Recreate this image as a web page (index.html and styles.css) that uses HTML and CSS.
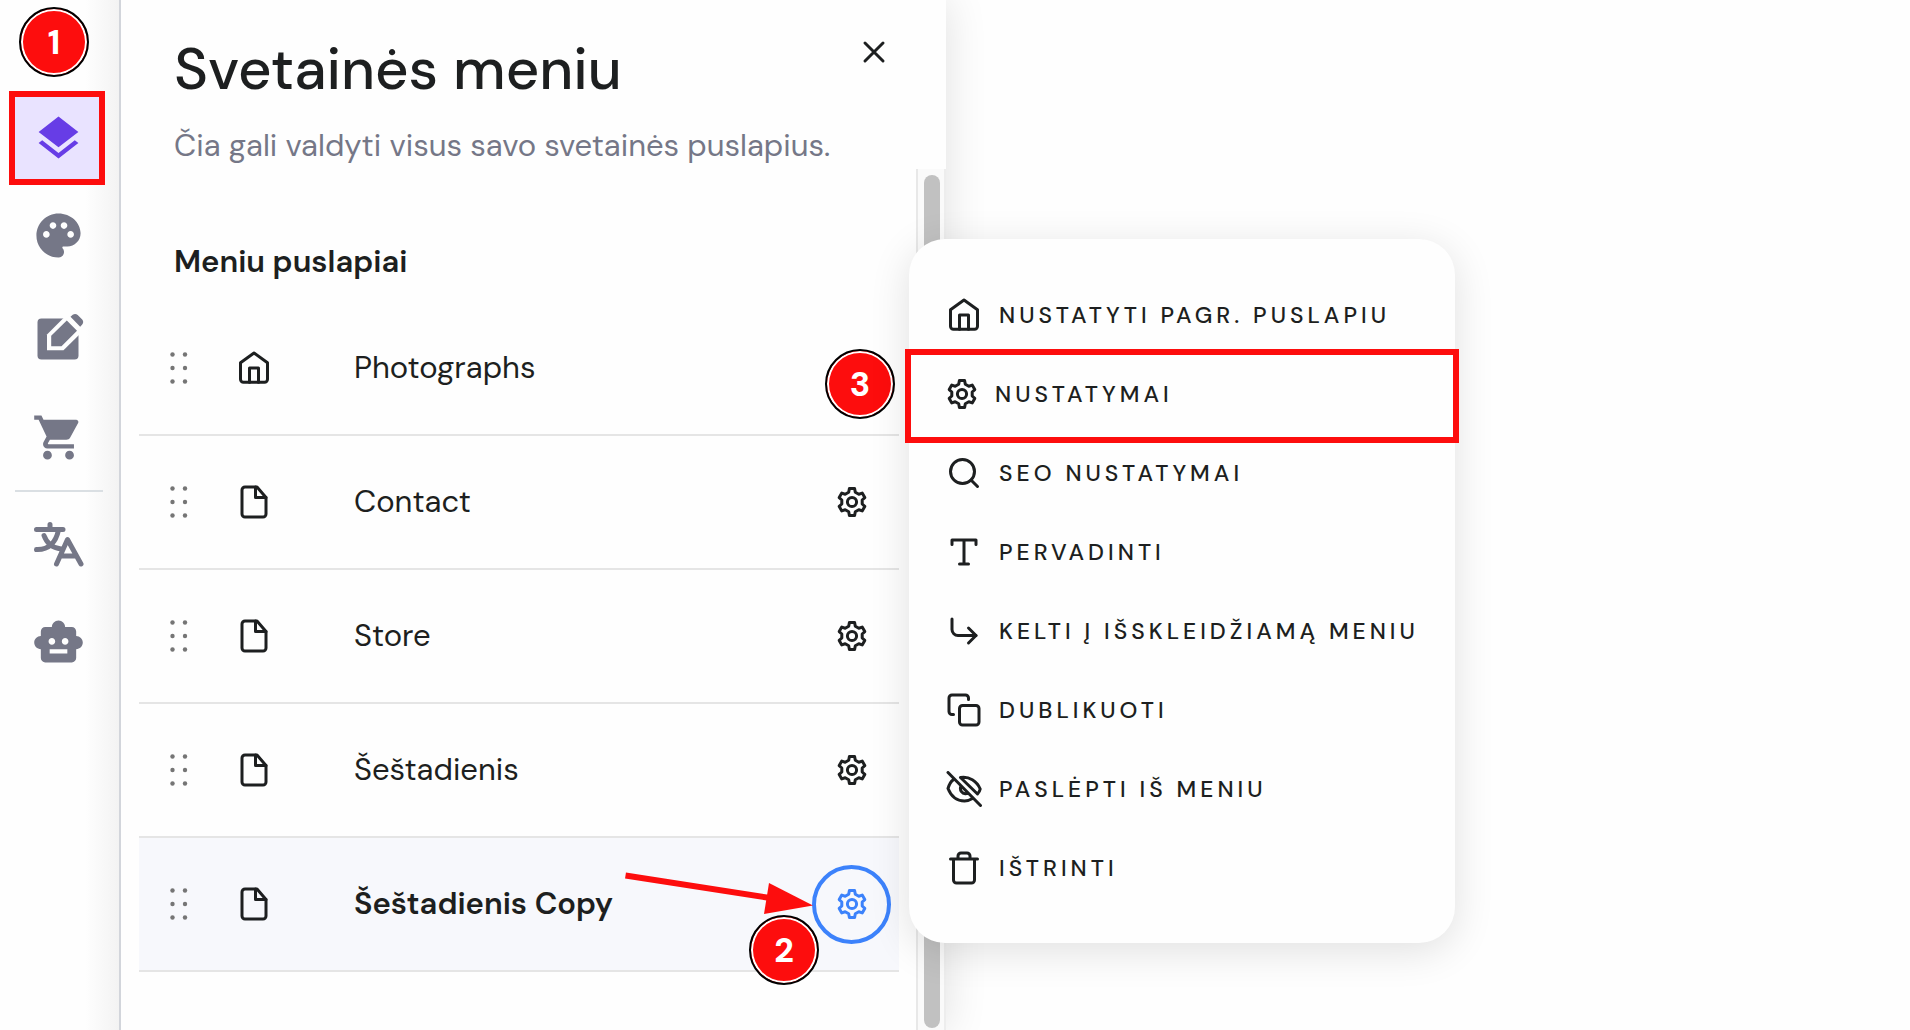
FILE: index.html
```
<!DOCTYPE html>
<html lang="lt">
  <head>
    <meta charset="utf-8">
    <title>Svetainės meniu</title>
    <link rel="stylesheet" href="styles.css">
  </head>
  <body>
    <!-- shared icons -->
    <svg class="sprite" aria-hidden="true">
      <symbol id="gear" viewBox="-16 -16 32 32">
        <path d="M-2.6-13.5H2.6L3.3-9.8 6.8-7.8 10.2-8.9 12.8-4.4 10.2-2V2L12.8 4.4 10.2 8.9 6.8 7.8 3.3 9.8 2.6 13.5H-2.6L-3.3 9.8-6.8 7.8-10.2 8.9-12.8 4.4-10.2 2V-2L-12.8-4.4-10.2-8.9-6.8-7.8-3.3-9.8Z"/>
        <circle r="4.6"/>
      </symbol>
      <symbol id="home" viewBox="0 0 24 24">
        <path d="M3 8.500l9-6.500L21 8.500v11a2 2 0 0 1-2 2H5a2 2 0 0 1-2-2z"/>
        <path d="M9 21.500V12h6v9.500"/>
      </symbol>
      <symbol id="file" viewBox="0 0 24 24">
        <path d="M14 2H6a2 2 0 0 0-2 2v16a2 2 0 0 0 2 2h12a2 2 0 0 0 2-2V9z"/>
        <path d="M13 2v7h7"/>
      </symbol>
      <symbol id="dots" viewBox="0 0 18 32">
        <circle cx="2.5" cy="2.5" r="2.2"/><circle cx="15" cy="2.5" r="2.2"/>
        <circle cx="2.5" cy="16" r="2.2"/><circle cx="15" cy="16" r="2.2"/>
        <circle cx="2.5" cy="29.500" r="2.2"/><circle cx="15" cy="29.500" r="2.2"/>
      </symbol>
    </svg>

    <div class="app">
      <nav class="sidebar">
        <span class="badge badge-one">1</span>
        <button class="tool tool-active" type="button" aria-label="Puslapiai">
          <svg viewBox="0 0 24 24"><path d="M11.990 18.540l-7.370-5.730L3 14.070l9 7 9-7-1.630-1.270-7.380 5.740zM12 16l7.360-5.730L21 9l-9-7-9 7 1.630 1.270L12 16z"/></svg>
        </button>
        <button class="tool" type="button" aria-label="Stilius">
          <svg viewBox="0 0 24 24"><path d="M12 2C6.490 2 2 6.490 2 12s4.490 10 10 10c1.380 0 2.500-1.120 2.500-2.500 0-.61-.23-1.200-.64-1.670-.08-.1-.13-.21-.13-.33 0-.28.22-.5.5-.5H16c3.310 0 6-2.690 6-6 0-4.960-4.490-9-10-9zM6.500 13C5.670 13 5 12.330 5 11.500S5.670 10 6.500 10 8 10.670 8 11.500 7.330 13 6.500 13zm3-4C8.670 9 8 8.330 8 7.500S8.670 6 9.500 6s1.500.67 1.500 1.500S10.330 9 9.500 9zm5 0c-.83 0-1.500-.67-1.500-1.500S13.670 6 14.500 6s1.500.67 1.500 1.500S15.330 9 14.500 9zm3 4c-.83 0-1.500-.67-1.500-1.500s.67-1.500 1.500-1.500 1.500.67 1.500 1.500-.67 1.500-1.500 1.500z"/></svg>
        </button>
        <button class="tool" type="button" aria-label="Redaguoti">
          <svg viewBox="0 0 53 53">
            <rect x="5.500" y="8.500" width="41" height="41" rx="4"/>
            <path class="cut" d="M15 24.500V40.200H31.500L49 23V5H34.500z"/>
            <path d="M19.200 25.800V36.200H29.500L45 20.700 34.800 10.400zM38.500 6.800l2.200-2a4 4 0 0 1 5 .2l4.500 4.500a4 4 0 0 1 0 5l-2 2.200z"/>
          </svg>
        </button>
        <button class="tool" type="button" aria-label="Parduotuvė">
          <svg viewBox="0 0 24 24"><path d="M7 18c-1.100 0-1.990.9-1.990 2S5.900 22 7 22s2-.9 2-2-.9-2-2-2zM1 2v2h2l3.600 7.590-1.350 2.450c-.16.28-.25.61-.25.96 0 1.100.9 2 2 2h12v-2H7.420c-.14 0-.25-.11-.25-.25l.03-.12.9-1.630h7.450c.75 0 1.410-.41 1.750-1.030l3.580-6.490c.08-.14.12-.31.12-.48 0-.55-.45-1-1-1H5.210l-.94-2H1zm16 16c-1.100 0-1.990.9-1.990 2s.89 2 1.990 2 2-.9 2-2-.9-2-2-2z"/></svg>
        </button>
        <hr class="divider">
        <button class="tool" type="button" aria-label="Kalbos">
          <svg class="tool-line" viewBox="0 0 53 53">
            <path d="M4.500 11.500H31M18 6.500V11M12 17.500C15 26 20 30 29 31M26.500 12C24 24 17 32 4.500 31.500M24.500 46L35.500 21.500 49 46M28.500 38H43"/>
          </svg>
        </button>
        <button class="tool" type="button" aria-label="DI asistentas">
          <svg viewBox="0 0 24 24"><path d="M20 9V7c0-1.100-.9-2-2-2h-3c0-1.660-1.340-3-3-3S9 3.340 9 5H6c-1.100 0-2 .9-2 2v2c-1.660 0-3 1.340-3 3s1.340 3 3 3v4c0 1.100.9 2 2 2h12c1.100 0 2-.9 2-2v-4c1.660 0 3-1.340 3-3s-1.340-3-3-3zM7.500 11.500c0-.83.67-1.500 1.500-1.500s1.500.67 1.500 1.500S9.830 13 9 13s-1.500-.67-1.500-1.500zM16 17H8v-2h8v2zm-1-4c-.83 0-1.500-.67-1.500-1.500S14.170 10 15 10s1.500.67 1.500 1.500S15.830 13 15 13z"/></svg>
        </button>
      </nav>

      <main class="panel">
        <header class="panel-header">
          <div>
            <h1>Svetainės meniu</h1>
            <p>Čia gali valdyti visus savo svetainės puslapius.</p>
          </div>
          <button class="close" type="button" aria-label="Uždaryti">
            <svg viewBox="0 0 24 24"><path d="M3 3l18 18M21 3L3 21"/></svg>
          </button>
        </header>

        <div class="panel-body">
          <section class="pages">
            <h2>Meniu puslapiai</h2>
            <ul class="page-list">
              <li class="page">
                <svg class="dots"><use href="#dots"/></svg>
                <svg class="icon"><use href="#home"/></svg>
                <span class="page-name">Photographs</span>
                <span class="badge badge-three">3</span>
              </li>
              <li class="page">
                <svg class="dots"><use href="#dots"/></svg>
                <svg class="icon"><use href="#file"/></svg>
                <span class="page-name">Contact</span>
                <button class="gear" type="button" aria-label="Contact nustatymai"><svg><use href="#gear"/></svg></button>
              </li>
              <li class="page">
                <svg class="dots"><use href="#dots"/></svg>
                <svg class="icon"><use href="#file"/></svg>
                <span class="page-name">Store</span>
                <button class="gear" type="button" aria-label="Store nustatymai"><svg><use href="#gear"/></svg></button>
              </li>
              <li class="page">
                <svg class="dots"><use href="#dots"/></svg>
                <svg class="icon"><use href="#file"/></svg>
                <span class="page-name">Šeštadienis</span>
                <button class="gear" type="button" aria-label="Šeštadienis nustatymai"><svg><use href="#gear"/></svg></button>
              </li>
              <li class="page page-active">
                <svg class="dots"><use href="#dots"/></svg>
                <svg class="icon"><use href="#file"/></svg>
                <span class="page-name">Šeštadienis Copy</span>
                <button class="gear" type="button" aria-label="Šeštadienis Copy nustatymai"><svg><use href="#gear"/></svg></button>
                <svg class="arrow" viewBox="0 0 190 50" aria-hidden="true">
                  <path d="M1.500 7.500L146 30" stroke="#fd0d0d" stroke-width="6"/>
                  <path d="M145 15l44 22.500-49 8.500z" fill="#fd0d0d"/>
                </svg>
                <span class="badge badge-two">2</span>
              </li>
            </ul>
          </section>
          <div class="scrollbar" aria-hidden="true"><div class="thumb"></div></div>
        </div>

        <div class="menu">
          <button class="menu-item" type="button"><svg class="icon"><use href="#home"/></svg>Nustatyti pagr. puslapiu</button>
          <button class="menu-item menu-marked" type="button"><svg class="icon icon-gear"><use href="#gear"/></svg>Nustatymai</button>
          <button class="menu-item" type="button">
            <svg class="icon" viewBox="0 0 24 24"><circle cx="11" cy="11" r="8"/><path d="M21 21l-4.350-4.350"/></svg>SEO nustatymai</button>
          <button class="menu-item" type="button">
            <svg class="icon" viewBox="0 0 24 24"><path d="M4 7V4h16v3M9 20h6M12 4v16"/></svg>Pervadinti</button>
          <button class="menu-item" type="button">
            <svg class="icon" viewBox="0 0 24 24"><path d="M15 10l5 5-5 5"/><path d="M4 4v7a4 4 0 0 0 4 4h12"/></svg>Kelti į išskleidžiamą meniu</button>
          <button class="menu-item" type="button">
            <svg class="icon" viewBox="0 0 24 24"><rect x="9" y="9" width="13" height="13" rx="2"/><path d="M5 15H4a2 2 0 0 1-2-2V4a2 2 0 0 1 2-2h9a2 2 0 0 1 2 2v1"/></svg>Dublikuoti</button>
          <button class="menu-item" type="button">
            <svg class="icon icon-px" viewBox="0 0 36 36"><path d="M2 1.500L34.500 34.500M7 9C5 10.500 3 14 2 17.500 5 25 11 30 18.500 30 21.500 30 24 29 26.500 27.500M14.500 6.500C23 5 31 10 34.200 18 33.800 20 33 21.500 31.500 23L14.500 6.500M14.800 15.500C13.500 19 16 23.500 20.500 22.500"/></svg>Paslėpti iš meniu</button>
          <button class="menu-item" type="button">
            <svg class="icon" viewBox="0 0 24 24"><path d="M3 6h18M19 6v14a2 2 0 0 1-2 2H7a2 2 0 0 1-2-2V6M8 6V4a2 2 0 0 1 2-2h4a2 2 0 0 1 2 2v2"/></svg>Ištrinti</button>
        </div>
      </main>
    </div>
  </body>
</html>
```
FILE: styles.css
```
* {
  box-sizing: border-box;
}

body {
  margin: 0;
  font-family: "DM Sans", Inter, sans-serif;
  color: #1d1f20;
  background-color: #fefefe;
}

h1, h2, p, ul {
  margin: 0;
  padding: 0;
}

button {
  font: inherit;
  color: inherit;
  background: none;
  border: none;
  padding: 0;
  cursor: pointer;
}

svg {
  display: block;
}

.sprite {
  position: absolute;
  width: 0;
  height: 0;
}

.app {
  display: flex;
  height: 100vh;
  overflow: hidden;
}

/* left toolbar */
.sidebar {
  position: relative;
  z-index: 1;
  display: flex;
  flex-direction: column;
  flex: none;
  width: 121px;
  padding: 7px 14px 0 9px;
  border-right: 2px solid #d2d5db;
  background: linear-gradient(to right, #fefefe 85px, #f3f3f3);
}

.tool {
  display: flex;
  align-items: center;
  justify-content: center;
  width: 98px;
  height: 101px;
  color: #757787;
}

.tool svg {
  width: 53px;
  height: 53px;
  fill: currentColor;
}

.tool .cut {
  fill: #fefefe;
}

.tool .tool-line {
  fill: none;
  stroke: currentColor;
  stroke-width: 5;
  stroke-linecap: round;
  stroke-linejoin: round;
}

.tool-active {
  width: 96px;
  height: 94px;
  margin-top: 14px;
  padding-left: 2px;
  border: 6px solid #fd0d0d;
  background-color: #e9e3ff;
  color: #673de6;
}

.divider {
  width: 88px;
  margin: 2px 0 3px 6px;
  border: none;
  border-top: 2px solid #dadfe3;
}

.divider ~ .tool {
  height: 98px;
}

/* numbered steps */
.badge {
  display: flex;
  align-items: center;
  justify-content: center;
  width: 70px;
  height: 70px;
  border: 2px solid #000;
  border-radius: 50%;
  box-shadow: inset 0 0 0 2px #fff;
  background-color: #fd0d0d;
  color: #fff;
  font-size: 34px;
  font-weight: 800;
}

.badge-one {
  margin-left: 10px;
}

.badge-two {
  position: absolute;
  right: 80px;
  bottom: -15px;
}

.badge-three {
  position: absolute;
  right: 4px;
  bottom: 15px;
}

/* pages panel */
.panel {
  position: relative;
  display: flex;
  flex-direction: column;
  flex: 0 1 825px;
  background-color: #fefefe;
  box-shadow: 0 0 40px rgba(0, 0, 0, 0.12);
}

.panel-header {
  display: flex;
  justify-content: space-between;
  align-items: flex-start;
  height: 169px;
  padding: 33px 60px 0 53px;
}

h1 {
  font-size: 58px;
  font-weight: 500;
  line-height: 72px;
}

.panel-header p {
  margin-top: 21px;
  font-size: 31px;
  line-height: 40px;
  color: #757787;
}

.close {
  margin-top: 7px;
}

.close svg {
  width: 24px;
  height: 24px;
  fill: none;
  stroke: #1d1f20;
  stroke-width: 3;
  stroke-linecap: round;
}

.panel-body {
  display: flex;
  flex: 1;
  min-height: 0;
}

.pages {
  flex: 1;
  padding: 73px 17px 0 18px;
}

h2 {
  padding-left: 35px;
  font-size: 31px;
  font-weight: 600;
  line-height: 40px;
}

.page-list {
  margin-top: 20px;
  list-style: none;
}

.page {
  position: relative;
  display: flex;
  align-items: center;
  height: 134px;
  padding: 0 8px 0 31px;
  border-bottom: 2px solid #e5e5e5;
  font-size: 31px;
}

.page-active {
  background-color: #f7f8fc;
  font-weight: 600;
}

.dots {
  width: 18px;
  height: 32px;
  margin-right: 48px;
  fill: #757575;
}

.icon {
  width: 36px;
  height: 36px;
  fill: none;
  stroke: #1d1f20;
  stroke-width: 2;
  stroke-linecap: round;
  stroke-linejoin: round;
}

.icon-px {
  stroke-width: 3;
}

.page-name {
  flex: 1;
  margin: 0 0 2px 82px;
}

.gear {
  display: flex;
  align-items: center;
  justify-content: center;
  width: 79px;
  height: 79px;
  border: 4px solid transparent;
  border-radius: 50%;
}

.gear svg {
  width: 32px;
  height: 32px;
  fill: none;
  stroke: currentColor;
  stroke-width: 3;
  stroke-linejoin: round;
}

.page-active .gear {
  border-color: #3c82fb;
  color: #3c82fb;
}

.arrow {
  position: absolute;
  right: 85px;
  top: 30px;
  width: 190px;
  height: 50px;
}

.scrollbar {
  width: 30px;
  padding: 6px 6px 2px;
  border-left: 2px solid #e8e8e8;
  border-right: 2px solid #ededed;
  background-color: #fafafa;
}

.thumb {
  width: 16px;
  height: 100%;
  border-radius: 8px;
  background-color: #c1c1c1;
}

/* page settings menu */
.menu {
  position: absolute;
  top: 239px;
  left: calc(100% - 37px);
  display: flex;
  flex-direction: column;
  width: 546px;
  padding: 36px 0;
  border-radius: 36px;
  background-color: #fefefe;
  box-shadow: 0 8px 40px rgba(0, 0, 0, 0.12);
}

.menu-item {
  position: relative;
  display: flex;
  align-items: center;
  gap: 17px;
  height: 79px;
  padding-left: 37px;
  font-size: 23px;
  font-weight: 500;
  letter-spacing: 4px;
  text-transform: uppercase;
  white-space: nowrap;
}

.icon-gear {
  width: 32px;
  height: 32px;
  stroke-width: 3;
}

.menu-marked::after {
  content: "";
  position: absolute;
  inset: -5px -4px -10px;
  border: 6px solid #fd0d0d;
}
```
